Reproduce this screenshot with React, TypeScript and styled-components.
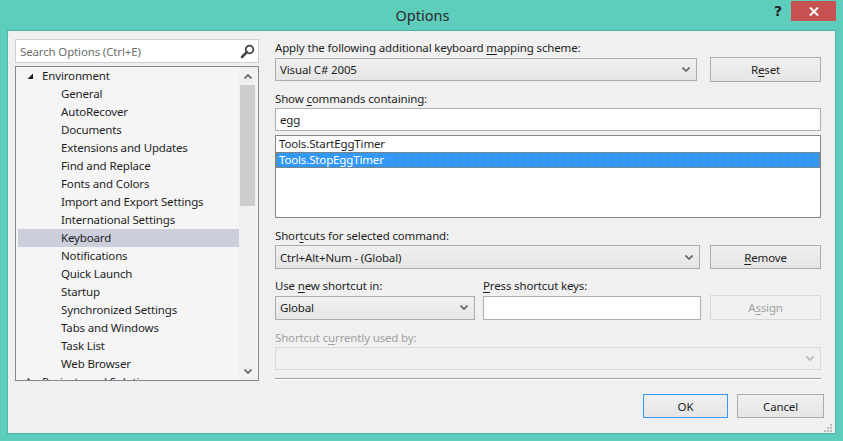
import React from 'react';
import styled, { createGlobalStyle } from 'styled-components';

const Global = createGlobalStyle`
  html, body { margin: 0; padding: 0; }
  body {
    width: 843px; height: 441px; overflow: hidden;
    font-family: "Noto Sans", "Segoe UI", sans-serif;
    font-size: 11.5px; letter-spacing: -0.15px; color: #1e1e1e;
  }
  * { box-sizing: border-box; }
`;

const Window = styled.div`
  width: 843px; height: 441px;
  background: #5ecdbb;
  display: flex; flex-direction: column;
  padding: 0 7px 7px 7px;
`;

const TitleBar = styled.div`
  height: 30px;
  display: grid;
  grid-template-columns: 1fr auto 1fr;
  align-items: start;
`;

const Title = styled.div`
  grid-column: 2;
  font-size: 14.5px; letter-spacing: 0; line-height: 30px; color: #2b2b2b;
  padding-left: 2px;
`;

const Controls = styled.div`
  grid-column: 3;
  justify-self: end;
  display: flex; align-items: flex-start; gap: 9px;
  padding-top: 1px;
`;

const HelpGlyph = styled.span`
  font-family: "DejaVu Sans", sans-serif;
  font-weight: bold; font-size: 14px; line-height: 20px; color: #222;
`;

const CloseBtn = styled.div`
  width: 45px; height: 20px; background: #c75050;
  display: flex; align-items: center; justify-content: center;
`;

const Body = styled.div`
  flex: 1;
  position: relative;
  background: #f0f0f0;
  border: 1px solid #4fb5a4;
  display: flex; flex-direction: column;
  padding: 8px 11px 0 7px;
`;

const Main = styled.div`
  display: flex; gap: 16px; height: 342px; margin-right: 3px;
`;

const LeftCol = styled.div`
  width: 244px; display: flex; flex-direction: column; gap: 3px;
`;

const SearchBox = styled.div`
  height: 24px; background: #fff; border: 1px solid #cccedb;
  display: flex; align-items: center; justify-content: space-between;
  padding: 0 3px 0 4px; color: #6d6d6d;
`;

const Tree = styled.div`
  flex: 1; background: #f5f5f5; border: 1px solid #828790;
  display: flex; padding: 0 2px 0 1px; overflow: hidden;
`;

const TreeRows = styled.div`
  flex: 1; overflow: hidden;
`;

const TreeRow = styled.div<{ $level: number; $selected?: boolean }>`
  height: 18px; line-height: 18px; white-space: nowrap;
  margin-left: 1px;
  padding-left: ${p => (p.$level === 0 ? 9 : 43)}px;
  background: ${p => (p.$selected ? '#cccedb' : 'transparent')};
  display: flex; align-items: center;
`;

const Expander = styled.span`
  width: 15px; display: inline-flex; align-items: center;
`;

const ScrollBar = styled.div`
  width: 17px; display: flex; flex-direction: column; background: #f0f0f0;
`;

const ScrollArrow = styled.div`
  height: 18px; display: flex; align-items: center; justify-content: center;
`;

const ScrollTrack = styled.div`
  flex: 1; padding: 0 1px;
`;

const Thumb = styled.div`
  height: 121px; background: #cdcdcd;
`;

const RightCol = styled.div`
  width: 546px; display: flex; flex-direction: column;
`;

const Label = styled.div<{ $mt?: number; $disabled?: boolean; $w?: number }>`
  height: 17px; line-height: 17px; margin-top: ${p => p.$mt ?? 0}px;
  color: ${p => (p.$disabled ? '#a0a0a0' : '#1e1e1e')};
  white-space: nowrap;
  ${p => (p.$w ? `width: ${p.$w}px; flex: none;` : '')}
`;

const LabelRow = styled.div<{ $mt?: number }>`
  display: flex; margin-top: ${p => p.$mt ?? 0}px;
`;

const Row = styled.div<{ $mt?: number; $h: number; $gap: number }>`
  display: flex; align-items: center;
  margin-top: ${p => p.$mt ?? 0}px; height: ${p => p.$h}px; gap: ${p => p.$gap}px;
`;

const Combo = styled.div<{ $w?: number; $h: number; $disabled?: boolean }>`
  ${p => (p.$w ? `width: ${p.$w}px; flex: none;` : 'flex: 1;')}
  height: ${p => p.$h}px;
  border: 1px solid ${p => (p.$disabled ? '#d9d9d9' : '#acacac')};
  background: ${p => (p.$disabled ? '#f0f0f0' : 'linear-gradient(#f0f0f0, #e5e5e5)')};
  display: flex; align-items: center; justify-content: space-between;
  padding: 0 6px 0 4px;
`;

const TextBox = styled.div<{ $w?: number; $h: number; $mt?: number }>`
  ${p => (p.$w ? `width: ${p.$w}px; flex: none;` : '')}
  margin-top: ${p => p.$mt ?? 0}px;
  height: ${p => p.$h}px; background: #fff; border: 1px solid #abadb3;
  display: flex; align-items: center; padding: 0 4px;
`;

const Button = styled.div<{ $w: number; $h: number; $disabled?: boolean; $default?: boolean }>`
  width: ${p => p.$w}px; height: ${p => p.$h}px; flex: none;
  border: 1px solid ${p => (p.$default ? '#3399ff' : p.$disabled ? '#d9d9d9' : '#acacac')};
  background: ${p => (p.$disabled ? '#f0f0f0' : 'linear-gradient(#f0f0f0, #e5e5e5)')};
  color: ${p => (p.$disabled ? '#a0a0a0' : '#1e1e1e')};
  display: flex; align-items: center; justify-content: center;
`;

const List = styled.div`
  margin-top: 4px; height: 83px; background: #fff; border: 1px solid #828790;
`;

const ListItem = styled.div<{ $selected?: boolean }>`
  height: 16px; line-height: 15px; padding-left: 3px;
  background: ${p => (p.$selected ? '#3399ff' : 'transparent')};
  color: ${p => (p.$selected ? '#fff' : '#1e1e1e')};
  outline: ${p => (p.$selected ? '1px dotted #b07030' : 'none')};
  outline-offset: -1px;
`;

const Separator = styled.div`
  margin-top: 8px; height: 2px; border-top: 1px solid #a0a0a0; border-bottom: 1px solid #fff;
`;

const Footer = styled.div`
  display: flex; justify-content: flex-end; gap: 9px; margin-top: 13px;
`;

const Grip = styled.div`
  position: absolute; right: 2px; bottom: 2px; width: 10px; height: 10px;
`;

const U = styled.span`
  text-decoration: underline; text-underline-offset: 2px;
`;

const Chevron = ({ color = '#606060', up = false }: { color?: string; up?: boolean }) => (
  <svg width="8" height="5" viewBox="0 0 8 5">
    <polyline
      points={up ? '0.5,4.5 4,1 7.5,4.5' : '0.5,0.5 4,4 7.5,0.5'}
      fill="none"
      stroke={color}
      strokeWidth="1.6"
    />
  </svg>
);

const treeItems: { label: string; level: number; selected?: boolean; expanded?: boolean }[] = [
  { label: 'Environment', level: 0, expanded: true },
  { label: 'General', level: 1 },
  { label: 'AutoRecover', level: 1 },
  { label: 'Documents', level: 1 },
  { label: 'Extensions and Updates', level: 1 },
  { label: 'Find and Replace', level: 1 },
  { label: 'Fonts and Colors', level: 1 },
  { label: 'Import and Export Settings', level: 1 },
  { label: 'International Settings', level: 1 },
  { label: 'Keyboard', level: 1, selected: true },
  { label: 'Notifications', level: 1 },
  { label: 'Quick Launch', level: 1 },
  { label: 'Startup', level: 1 },
  { label: 'Synchronized Settings', level: 1 },
  { label: 'Tabs and Windows', level: 1 },
  { label: 'Task List', level: 1 },
  { label: 'Web Browser', level: 1 },
  { label: 'Projects and Solutions', level: 0 },
];

export default function App() {
  return (
    <>
      <Global />
      <Window>
        <TitleBar>
          <Title>Options</Title>
          <Controls>
            <HelpGlyph>?</HelpGlyph>
            <CloseBtn>
              <svg width="10" height="9" viewBox="0 0 10 9">
                <path d="M1 0.5 L9 8.5 M9 0.5 L1 8.5" stroke="#fff" strokeWidth="2" />
              </svg>
            </CloseBtn>
          </Controls>
        </TitleBar>
        <Body>
          <Main>
            <LeftCol>
              <SearchBox>
                <span>Search Options (Ctrl+E)</span>
                <svg width="15" height="15" viewBox="0 0 15 15">
                  <circle cx="9.5" cy="5.5" r="3.8" fill="none" stroke="#424242" strokeWidth="1.8" />
                  <path d="M6.8 8.2 L2 13" stroke="#424242" strokeWidth="2.6" strokeLinecap="round" />
                </svg>
              </SearchBox>
              <Tree>
                <TreeRows>
                  {treeItems.map(it => (
                    <TreeRow key={it.label} $level={it.level} $selected={it.selected}>
                      {it.level === 0 && (
                        <Expander>
                          {it.expanded ? (
                            <svg width="7" height="7" viewBox="0 0 7 7">
                              <polygon points="6,0.5 6,6 0.5,6" fill="#1e1e1e" />
                            </svg>
                          ) : (
                            <svg width="7" height="9" viewBox="0 0 7 9">
                              <polygon points="1,0.5 5.5,4.5 1,8.5" fill="none" stroke="#1e1e1e" />
                            </svg>
                          )}
                        </Expander>
                      )}
                      {it.label}
                    </TreeRow>
                  ))}
                </TreeRows>
                <ScrollBar>
                  <ScrollArrow>
                    <Chevron up />
                  </ScrollArrow>
                  <ScrollTrack>
                    <Thumb />
                  </ScrollTrack>
                  <ScrollArrow>
                    <Chevron />
                  </ScrollArrow>
                </ScrollBar>
              </Tree>
            </LeftCol>
            <RightCol>
              <Label>
                Apply the following additional keyboard <U>m</U>apping scheme:
              </Label>
              <Row $mt={1} $h={25} $gap={13}>
                <Combo $w={422} $h={23}>
                  <span>Visual C# 2005</span>
                  <Chevron />
                </Combo>
                <Button $w={111} $h={25}>
                  R<U>e</U>set
                </Button>
              </Row>
              <Label $mt={8}>
                Show <U>c</U>ommands containing:
              </Label>
              <TextBox $mt={1} $h={23}>
                egg
              </TextBox>
              <List>
                <ListItem>Tools.StartEggTimer</ListItem>
                <ListItem $selected>Tools.StopEggTimer</ListItem>
              </List>
              <Label $mt={9}>
                Shor<U>t</U>cuts for selected command:
              </Label>
              <Row $mt={1} $h={24} $gap={10}>
                <Combo $w={425} $h={24}>
                  <span>Ctrl+Alt+Num - (Global)</span>
                  <Chevron />
                </Combo>
                <Button $w={111} $h={24}>
                  <U>R</U>emove
                </Button>
              </Row>
              <LabelRow $mt={8}>
                <Label $w={208}>
                  Use <U>n</U>ew shortcut in:
                </Label>
                <Label>
                  <U>P</U>ress shortcut keys:
                </Label>
              </LabelRow>
              <Row $mt={1} $h={25} $gap={8}>
                <Combo $w={200} $h={24}>
                  <span>Global</span>
                  <Chevron />
                </Combo>
                <TextBox $w={218} $h={24} />
                <Button $w={111} $h={25} $disabled style={{ marginLeft: 1 }}>
                  A<U>s</U>sign
                </Button>
              </Row>
              <Label $mt={9} $disabled>
                Shortcut c<U>u</U>rrently used by:
              </Label>
              <Row $mt={1} $h={23} $gap={0}>
                <Combo $h={23} $disabled>
                  <span />
                  <Chevron color="#b8b8b8" />
                </Combo>
              </Row>
              <Separator />
            </RightCol>
          </Main>
          <Footer>
            <Button $w={85} $h={24} $default>
              OK
            </Button>
            <Button $w={87} $h={24}>
              Cancel
            </Button>
          </Footer>
          <Grip>
            <svg width="10" height="10" viewBox="0 0 10 10">
              {[
                [7, 1],
                [4, 4],
                [7, 4],
                [1, 7],
                [4, 7],
                [7, 7],
              ].map(([x, y]) => (
                <rect key={`${x}-${y}`} x={x} y={y} width="2" height="2" fill="#b8b8b8" />
              ))}
            </svg>
          </Grip>
        </Body>
      </Window>
    </>
  );
}
